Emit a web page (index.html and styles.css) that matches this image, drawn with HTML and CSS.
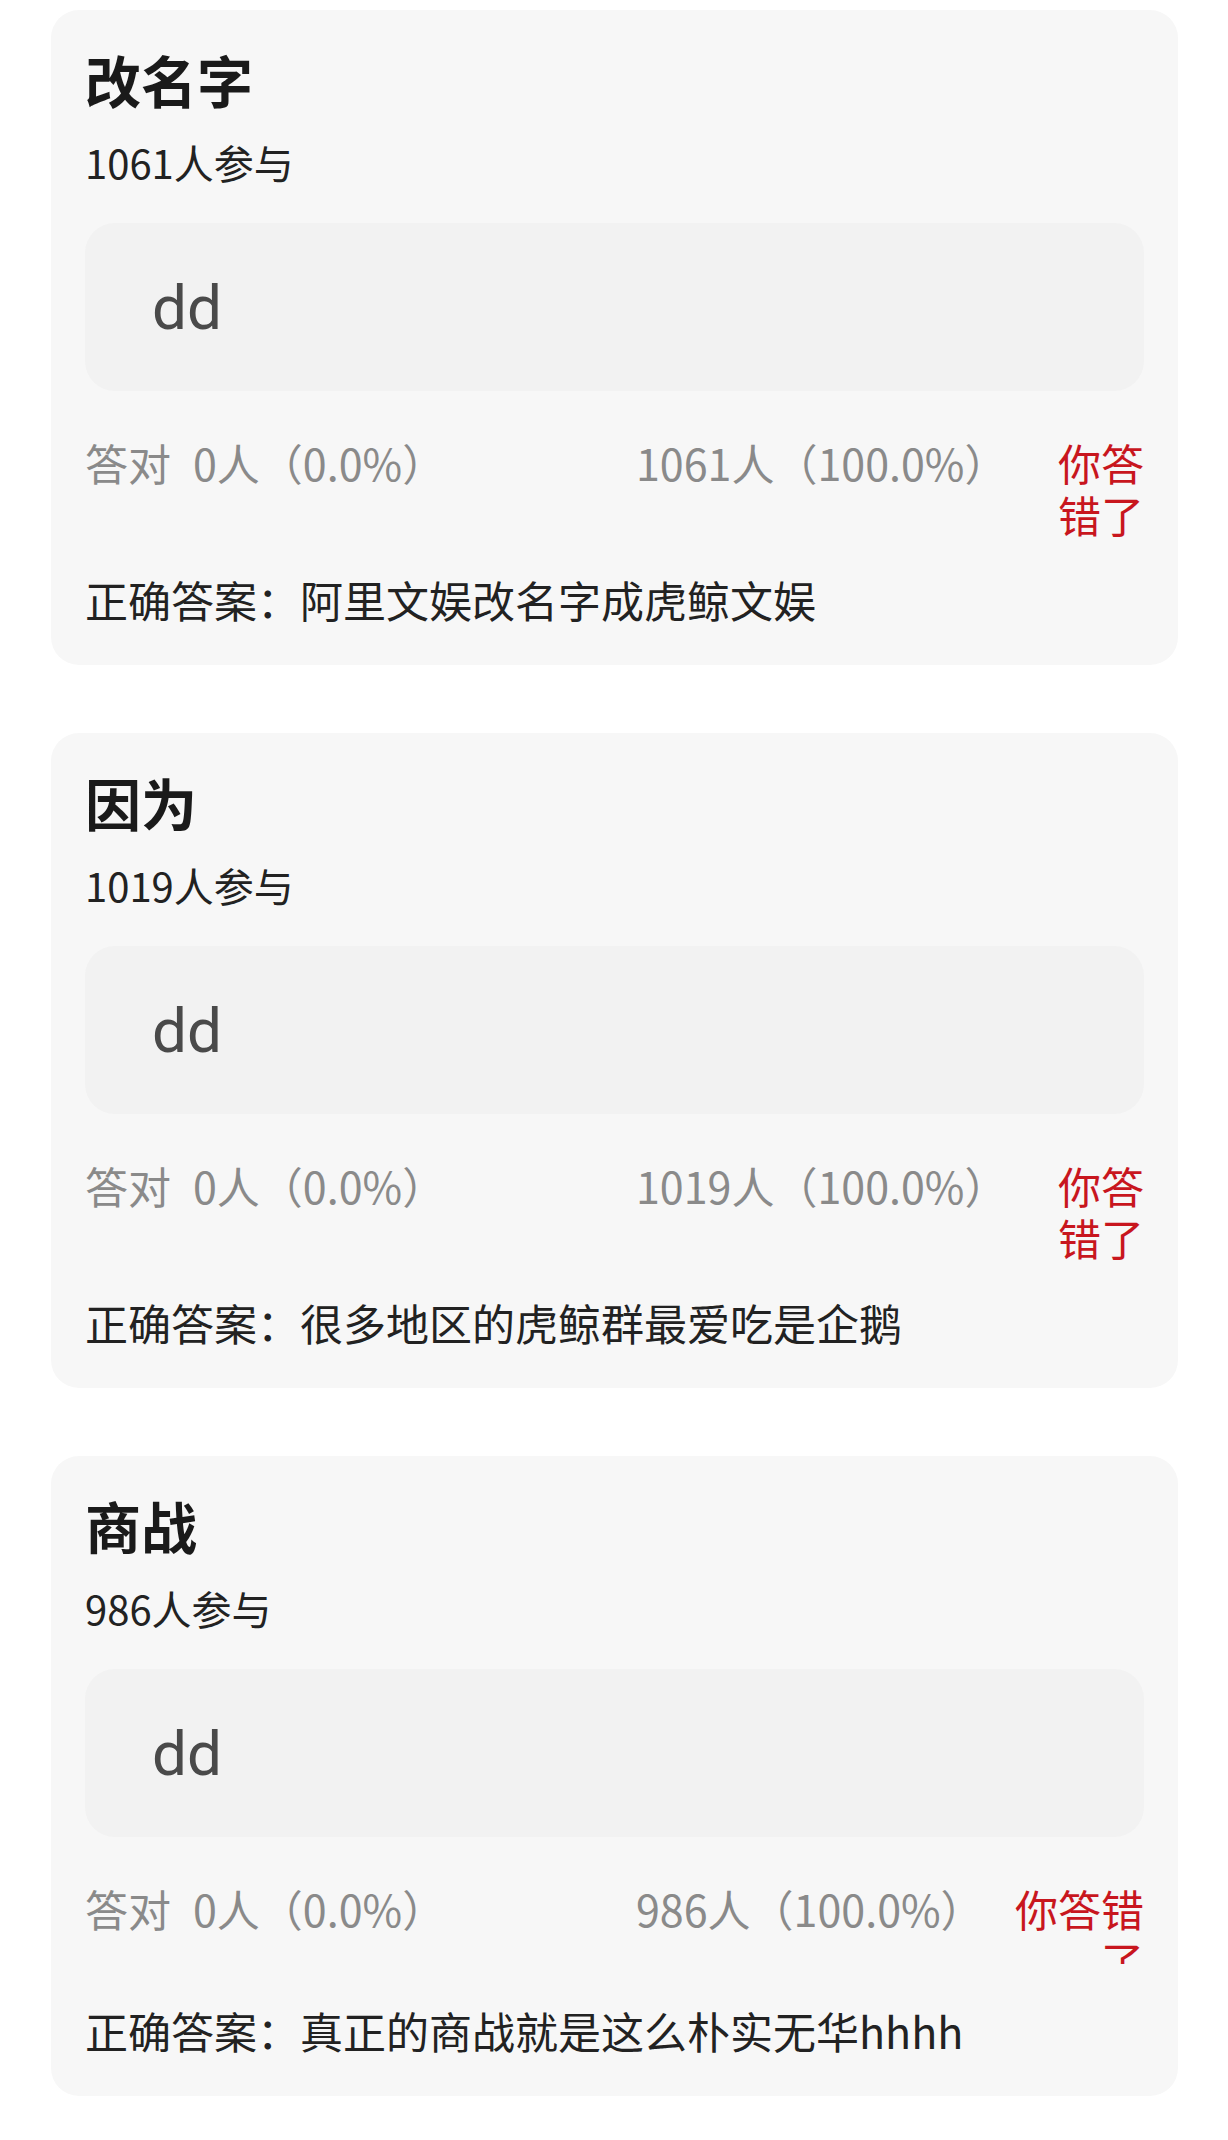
FILE: index.html
```html
<!DOCTYPE html>
<html lang="zh-CN">
<head>
    <meta charset="UTF-8">
    <title>答题结果</title>
    <meta name="viewport" content="width=device-width, initial-scale=1.0">
    <link rel="stylesheet" href="styles.css">
</head>
<body>

    <div class="quiz-list">
        <div class="quiz-card">
            <div class="quiz-title">改名字</div>
            <div class="quiz-count">1061人参与</div>
            <div class="my-answer">dd</div>
            <div class="stats">
                <div class="stat-right">
                    <span>答对</span>
                    <span class="stat-num">0人（0.0%）</span>
                </div>
                <div class="stat-wrong">1061人（100.0%）</div>
                <div class="verdict">你答错了</div>
            </div>
            <div class="correct-answer">正确答案：阿里文娱改名字成虎鲸文娱</div>
        </div>

        <div class="quiz-card">
            <div class="quiz-title">因为</div>
            <div class="quiz-count">1019人参与</div>
            <div class="my-answer">dd</div>
            <div class="stats">
                <div class="stat-right">
                    <span>答对</span>
                    <span class="stat-num">0人（0.0%）</span>
                </div>
                <div class="stat-wrong">1019人（100.0%）</div>
                <div class="verdict">你答错了</div>
            </div>
            <div class="correct-answer">正确答案：很多地区的虎鲸群最爱吃是企鹅</div>
        </div>

        <div class="quiz-card">
            <div class="quiz-title">商战</div>
            <div class="quiz-count">986人参与</div>
            <div class="my-answer">dd</div>
            <div class="stats">
                <div class="stat-right">
                    <span>答对</span>
                    <span class="stat-num">0人（0.0%）</span>
                </div>
                <div class="stat-wrong">986人（100.0%）</div>
                <div class="verdict clipped">你答错了</div>
            </div>
            <div class="correct-answer">正确答案：真正的商战就是这么朴实无华hhhh</div>
        </div>
    </div>

</body>
</html>
```

FILE: styles.css
```css
body {
    margin: 0;
    background-color: #ffffff;
    color: #222222;
    font-family: 'Noto Sans CJK SC', 'Noto Sans', sans-serif;
}

.quiz-list {
    display: flex;
    flex-direction: column;
    gap: 68px;
    padding: 10px 50px 0 51px;
}

.quiz-card {
    background-color: #f7f7f7;
    border-radius: 28px;
    padding: 33px 34px 37px 34px;
}

.quiz-title {
    font-size: 56px;
    font-weight: 700;
    line-height: 72px;
    color: #1a1a1a;
}

.quiz-count {
    font-size: 40px;
    line-height: 52px;
    margin-top: 21px;
    color: #222222;
}

.my-answer {
    margin-top: 35px;
    height: 168px;
    box-sizing: border-box;
    background-color: #f2f2f2;
    border-radius: 30px;
    padding: 0 0 0 67px;
    display: flex;
    align-items: center;
    font-family: Roboto, 'Noto Sans', sans-serif;
    font-size: 62px;
    color: #4a4a4a;
}

.stats {
    display: flex;
    align-items: flex-start;
    margin-top: 43px;
    font-size: 43px;
    line-height: 57px;
    color: #8a8a8a;
}

.stat-right {
    flex: none;
    width: 551px;
    display: flex;
}

.stat-num {
    margin-left: 22px;
}

.stat-wrong {
    flex: none;
}

.verdict {
    flex: 1;
    min-width: 0;
    margin-left: 23px;
    padding-top: 2px;
    margin-bottom: 8px;
    line-height: 52px;
    text-align: right;
    color: #c8161e;
}

.verdict.clipped {
    max-height: 82px;
    overflow: hidden;
    margin-bottom: 15px;
}

.correct-answer {
    margin-top: 23px;
    font-size: 43px;
    line-height: 57px;
    color: #222222;
}
```
